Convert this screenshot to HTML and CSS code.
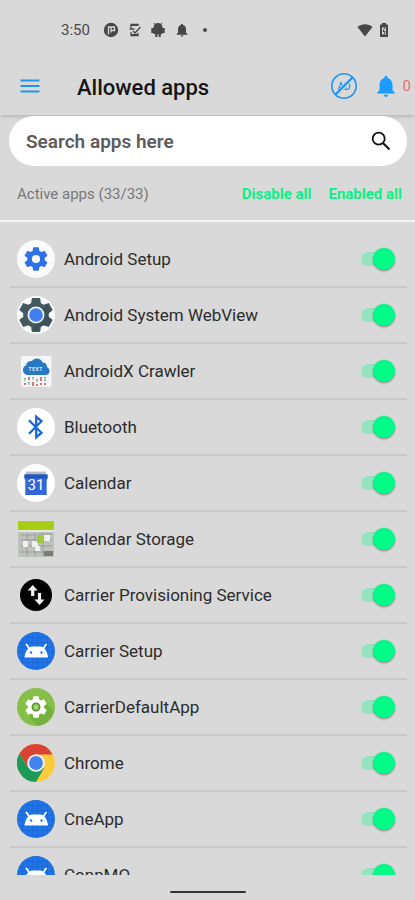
FILE: index.html
```html
<!DOCTYPE html>
<html lang="en">
<head>
<meta charset="utf-8">
<meta name="viewport" content="width=device-width, initial-scale=1">
<title>Allowed apps</title>
<link rel="stylesheet" href="styles.css">
</head>
<body>
<svg class="defs" aria-hidden="true">
  <defs>
    <pattern id="grid" width="5" height="5" patternUnits="userSpaceOnUse">
      <rect width="5" height="5" fill="#1f74ea"/>
      <path d="M0 0H5M0 0V5" stroke="#1a5fc4" stroke-width="1"/>
    </pattern>
    <symbol id="gear" viewBox="0 0 24 24">
      <path d="M19.43 12.98c.04-.32.07-.64.07-.98s-.03-.66-.07-.98l2.11-1.65c.19-.15.24-.42.12-.64l-2-3.46c-.12-.22-.39-.3-.61-.22l-2.49 1c-.52-.4-1.08-.73-1.69-.98l-.38-2.65A.49.49 0 0 0 14 2h-4c-.25 0-.46.18-.49.42l-.38 2.65c-.61.25-1.17.59-1.69.98l-2.49-1c-.23-.09-.49 0-.61.22l-2 3.46c-.13.22-.07.49.12.64l2.11 1.65c-.04.32-.07.65-.07.98s.03.66.07.98l-2.11 1.65c-.19.15-.24.42-.12.64l2 3.46c.12.22.39.3.61.22l2.49-1c.52.4 1.08.73 1.69.98l.38 2.65c.03.24.24.42.49.42h4c.25 0 .46-.18.49-.42l.38-2.65c.61-.25 1.17-.59 1.69-.98l2.49 1c.23.09.49 0 .61-.22l2-3.46c.12-.22.07-.49-.12-.64l-2.11-1.65zM12 15.5a3.5 3.5 0 1 1 0-7 3.5 3.5 0 0 1 0 7z"/>
    </symbol>
    <symbol id="bell" viewBox="0 0 24 24">
      <path d="M12 22c1.100 0 2-.9 2-2h-4c0 1.100.9 2 2 2zm6-6v-5c0-3.070-1.640-5.640-4.500-6.320V4c0-.83-.67-1.500-1.500-1.500s-1.500.67-1.500 1.500v.68C7.630 5.360 6 7.920 6 11v5l-2 2v1h16v-1l-2-2z"/>
    </symbol>
    <symbol id="droid" viewBox="0 0 38 38">
      <circle cx="19" cy="19" r="19" fill="url(#grid)"/>
      <path d="M7.500 25.500C8 20 10.500 15.800 14.500 14.500h9.500C28 15.800 30.500 20 31 25.500z" fill="#fff"/>
      <path d="M12.500 17l-3-4.500M26 17l3-4.500" stroke="#fff" stroke-width="1.800" stroke-linecap="round"/>
      <circle cx="14" cy="20.500" r="1.200" fill="#1f74ea"/><circle cx="24.500" cy="20.500" r="1.200" fill="#1f74ea"/>
    </symbol>
  </defs>
</svg>
<div class="screen">
  <div class="status">
    <span class="clock">3:50</span>
    <div class="notices">
      <svg viewBox="0 0 16 16" width="16" height="16"><circle cx="8" cy="8" r="7.200" fill="#474747"/><path d="M5.500 12.500V5H8v5.500M8 5h3.500v3.500H8" fill="none" stroke="#d9d9d9" stroke-width="1.300"/></svg>
      <svg viewBox="0 0 14 16" width="14" height="16"><path d="M10 4V2.500H3V6M3 10v3.500h7V11M1.500 7h5M5 9l2 2 5.500-6" fill="none" stroke="#474747" stroke-width="1.300"/><path d="M3 2h7v2H3zM3 12h7v2H3z" fill="#474747"/></svg>
      <svg viewBox="0 0 14 16" width="14" height="16"><path d="M2.500 5.500a4.500 4.500 0 0 1 9 0zM2.500 5.500h9V12H9.800v3H7.700v-2.500H6.300V15H4.200v-3H2.500zM.3 6h2.200v5H.3zM11.500 6h2.200v5h-2.200z" fill="#474747"/><path d="M4.500 3L3 .8M9.500 3L11 .8" stroke="#474747"/></svg>
      <svg width="16" height="16" fill="#474747"><use href="#bell"/></svg>
      <span class="dot"></span>
    </div>
    <div class="signals">
      <svg viewBox="0 0 16 14" width="16" height="14"><path d="M8 13.500L.5 4C4.500.2 11.500.2 15.500 4z" fill="#474747"/></svg>
      <svg viewBox="0 0 10 14" width="10" height="14"><path d="M3 0h4v1.500h2V14H1V1.500h2z" fill="#474747"/><path d="M3 4.500h4v7H3z" fill="#d9d9d9"/><path d="M5.800 4.500L4 8.500h2.200L5 11.500" stroke="#474747" stroke-width="1" fill="none"/></svg>
    </div>
  </div>

  <header class="appbar">
    <button class="icon-btn" aria-label="Menu"><svg viewBox="0 0 20 14" width="20" height="14"><path d="M.5 1.500h19M.5 7h19M.5 12.500h19" stroke="#2196e3" stroke-width="2"/></svg></button>
    <h1>Allowed apps</h1>
    <button class="icon-btn" aria-label="Remove ads"><svg viewBox="0 0 28 28" width="28" height="28"><circle cx="14" cy="14" r="12.200" fill="none" stroke="#2196f3" stroke-width="1.600"/><text x="14" y="18" class="ad-text">AD</text><path d="M7 22L21.500 6.500" stroke="#d9d9d9" stroke-width="4"/><path d="M5.500 22.500L22.500 5.500" stroke="#2196f3" stroke-width="2.300"/></svg></button>
    <button class="icon-btn bell" aria-label="Notifications, 0"><svg width="26" height="26" fill="#1a9bff"><use href="#bell"/></svg><span class="count">0</span></button>
  </header>

  <main>
    <div class="tools">
      <form class="search">
        <input type="text" aria-label="Search apps" placeholder="Search apps here">
        <button type="button" class="icon-btn" aria-label="Search"><svg viewBox="0 0 20 20" width="20" height="20"><circle cx="7.700" cy="7.700" r="6" fill="none" stroke="#111" stroke-width="1.800"/><path d="M12.200 12.200l6.300 6.300" stroke="#111" stroke-width="2"/></svg></button>
      </form>
      <div class="bulk">
        <span class="active">Active apps (33/33)</span>
        <button>Disable all</button>
        <button>Enabled all</button>
      </div>
    </div>

    <ul class="apps">
      <li><label for="a1"><svg viewBox="0 0 38 38"><circle cx="19" cy="19" r="19" fill="#fafafa"/><use href="#gear" x="5" y="5" width="28" height="28" fill="#2f6fe8"/></svg>Android Setup</label><input type="checkbox" role="switch" id="a1" checked></li>
      <li><label for="a2"><svg viewBox="0 0 38 38"><circle cx="19" cy="19" r="19" fill="#fafafa"/><use href="#gear" x="-1.500" y="-1.500" width="41" height="41" fill="#455a60"/><path d="M19 19L30 8l4 7-3 4 3 5-5 6-6-1-2 6h-4z" fill="#263b42" opacity=".3"/><circle cx="19" cy="19" r="8.500" fill="#eef2f5"/><circle cx="19" cy="19" r="6.800" fill="#3f7ff0"/></svg>Android System WebView</label><input type="checkbox" role="switch" id="a2" checked></li>
      <li><label for="a3"><svg viewBox="0 0 38 38"><rect x="4" y="4" width="30.500" height="31" rx="2" fill="#f6f6f6"/><path d="M10 23a5 5 0 0 1-1-9.500 5 5 0 0 1 6-4.500c2-3.500 9-3.500 10.500 1.500 3 0 4.500 2 4.500 4.500 4 2 3 8-1 8z" fill="#2677c4"/><text x="18.500" y="18.500" class="cloud-text">TEXT</text><path d="M8 26v3M16 25v3M20 27v3M28 25v4M12 30v3" stroke="#37966f" stroke-width="1.400" stroke-dasharray="1.500 1"/><path d="M12 25v3M24 25v4M8 31v2M16 30v4M20 32v2M28 31v2M24 31v2" stroke="#c73f54" stroke-width="1.400"/></svg>AndroidX Crawler</label><input type="checkbox" role="switch" id="a3" checked></li>
      <li><label for="a4"><svg viewBox="0 0 38 38"><circle cx="19" cy="19" r="19" fill="#fff"/><path d="M12 12.300L24.500 24.800 19.200 29.200V8.800L24.500 13.200 12 25.700" fill="none" stroke="#1668d6" stroke-width="2.300"/></svg>Bluetooth</label><input type="checkbox" role="switch" id="a4" checked></li>
      <li><label for="a5"><svg viewBox="0 0 38 38"><circle cx="19" cy="19" r="19" fill="#fff"/><path d="M9 7.500h20v4H9z" fill="#b9bdc4"/><path d="M7.500 10.500h23V15l-.8 1v15H8.300V16l-.8-1z" fill="#3367d6"/><path d="M7.500 10.500h23V14h-23z" fill="#2556bd"/><text x="19" y="25.500" class="date-text">31</text></svg>Calendar</label><input type="checkbox" role="switch" id="a5" checked></li>
      <li><label for="a6"><svg viewBox="0 0 38 38"><rect x="1" y="1" width="36" height="36" rx="1.500" fill="#bfc1bd"/><path d="M1 2.500Q1 1 2.500 1h33Q37 1 37 2.500V10H1z" fill="#a6ce17"/><path d="M1 10h36v2H1z" fill="#e4e6df"/><path d="M4 15h14M20 14h15M3 20h32M3 26h32M3 32h24M10 13v23M18 13v23M26 13v23" stroke="#93968f" stroke-width=".8"/><path d="M6 21h5v6H6zM15 21h6v6h-6zM27 15h6v6h-6zM18 26h5v5h-5z" fill="#f0f0f0"/><path d="M20 15h6v8h-6z" fill="#9fca3c"/><path d="M27 31h9v5h-9z" fill="#777b78"/></svg>Calendar Storage</label><input type="checkbox" role="switch" id="a6" checked></li>
      <li><label for="a7"><svg viewBox="0 0 38 38"><circle cx="19" cy="19" r="16" fill="#000"/><path d="M15.700 9l5 5.500h-3.400V20h-3.200v-5.500h-3.400zM22.500 29l-5-5.500h3.400V17h3.200v6.500h3.400z" fill="#f2f2f2"/></svg>Carrier Provisioning Service</label><input type="checkbox" role="switch" id="a7" checked></li>
      <li><label for="a8"><svg><use href="#droid"/></svg>Carrier Setup</label><input type="checkbox" role="switch" id="a8" checked></li>
      <li><label for="a9"><svg viewBox="0 0 38 38"><circle cx="19" cy="19" r="19" fill="#85bf48"/><path d="M27 13l9.500 9.500A19 19 0 0 1 21 38l-9-9z" fill="#76b03e"/><use href="#gear" x="6" y="6" width="26" height="26" fill="#fff"/><circle cx="19" cy="19" r="3.700" fill="#8fc65a" stroke="#55932a" stroke-width="1.500"/><circle cx="19" cy="19" r="1.500" fill="#b9dc95"/></svg>CarrierDefaultApp</label><input type="checkbox" role="switch" id="a9" checked></li>
      <li><label for="a10"><svg viewBox="0 0 38 38"><circle cx="19" cy="19" r="19" fill="#fccb3c"/><path d="M19 0A19 19 0 0 1 35.500 10.500H19L10.800 23.700 2.500 9.500A19 19 0 0 1 19 0z" fill="#d94335"/><path d="M2.500 9.500A19 19 0 0 0 19 38l8.200-14.300H10.800z" fill="#1b9b57"/><circle cx="19" cy="19" r="8.800" fill="#f2f2f2"/><circle cx="19" cy="19" r="6.900" fill="#4283f0"/></svg>Chrome</label><input type="checkbox" role="switch" id="a10" checked></li>
      <li><label for="a11"><svg><use href="#droid"/></svg>CneApp</label><input type="checkbox" role="switch" id="a11" checked></li>
      <li><label for="a12"><svg><use href="#droid"/></svg>ConnMO</label><input type="checkbox" role="switch" id="a12" checked></li>
    </ul>
  </main>
  <div class="navbar"><span></span></div>
</div>
</body>
</html>
```
FILE: styles.css
```css
* { box-sizing: border-box; }

body {
  margin: 0;
  background: #d9d9d9;
  color: #2c2c2c;
  font-family: Roboto, "Liberation Sans", sans-serif;
}

button {
  border: 0;
  padding: 0;
  background: none;
  font: inherit;
  cursor: pointer;
}

.defs { position: absolute; width: 0; height: 0; }

.screen {
  display: flex;
  flex-direction: column;
  height: 100vh;
  overflow: hidden;
}

.status {
  display: flex;
  align-items: center;
  flex: none;
  height: 60px;
  padding: 0 26px 0 61px;
}
.status svg { display: block; }
.clock { font-size: 15px; color: #4a4a4a; }
.notices { display: flex; align-items: center; gap: 9px; margin-left: 13px; }
.dot { width: 4px; height: 4px; margin-left: 4px; border-radius: 50%; background: #474747; }
.signals { display: flex; align-items: center; gap: 6px; margin-left: auto; }

.appbar {
  display: flex;
  align-items: center;
  flex: none;
  height: 55px;
  padding: 0 4px 3px 20px;
  box-shadow: 0 3px 3px -1px rgba(0, 0, 0, 0.15);
}
.icon-btn { display: flex; align-items: center; }
.appbar h1 {
  flex: 1;
  margin: 3px 0 0 37px;
  font-size: 22px;
  font-weight: 500;
  color: #151515;
}
.bell { margin-left: 15px; gap: 4px; }
.count { font-size: 15px; color: #f2696b; }
.ad-text { font-size: 10px; font-weight: 500; fill: #2196f3; text-anchor: middle; }

main {
  display: flex;
  flex-direction: column;
  flex: 1;
  min-height: 0;
}
.tools {
  flex: none;
  position: relative;
  padding-top: 1px;
  border-bottom: 2px solid #f4f4f4;
}
.search {
  display: flex;
  align-items: center;
  height: 50px;
  margin: 0 8px 0 9px;
  padding: 0 16px 0 17px;
  border-radius: 25px;
  background: #fff;
}
.search input {
  flex: 1;
  min-width: 0;
  padding: 0;
  border: 0;
  outline: 0;
  background: none;
  font: 600 19px Roboto, "Liberation Sans", sans-serif;
}
.search input::placeholder { color: #5c5c5c; opacity: 1; }

.bulk {
  display: flex;
  align-items: center;
  height: 54px;
  padding: 2px 13px 0 17px;
  gap: 17px;
}
.active { flex: 1; font-size: 15px; color: #777; }
.bulk button { font-size: 15px; font-weight: 700; color: #0fef88; }

.apps {
  flex: 1;
  min-height: 0;
  margin: 0;
  padding: 10px 8px 0 10px;
  overflow: hidden;
  list-style: none;
}
.apps li {
  display: flex;
  align-items: center;
  height: 56px;
  padding: 0 12px 0 7px;
  border-bottom: 2px solid #c8c8c8;
}
.apps label {
  display: flex;
  align-items: center;
  flex: 1;
  gap: 9px;
  font-size: 17px;
}
.apps label svg { flex: none; width: 38px; height: 38px; }
.apps input {
  appearance: none;
  display: flex;
  align-items: center;
  width: 34px;
  height: 22px;
  margin: 0;
}
.apps input::before {
  content: "";
  width: 22px;
  height: 14px;
  margin-right: -10px;
  border-radius: 7px;
  background: #95e4bf;
}
.apps input::after {
  content: "";
  width: 22px;
  height: 22px;
  border-radius: 50%;
  background: #00fb87;
  box-shadow: 0 1px 2px rgba(0, 0, 0, 0.4);
}
.date-text { font-size: 15px; fill: #fff; text-anchor: middle; }
.cloud-text { font-size: 6px; fill: #fff; text-anchor: middle; }

.navbar {
  display: flex;
  justify-content: center;
  flex: none;
  height: 25px;
  padding-top: 16px;
}
.navbar span { width: 76px; height: 2px; border-radius: 1px; background: #333; }
```
